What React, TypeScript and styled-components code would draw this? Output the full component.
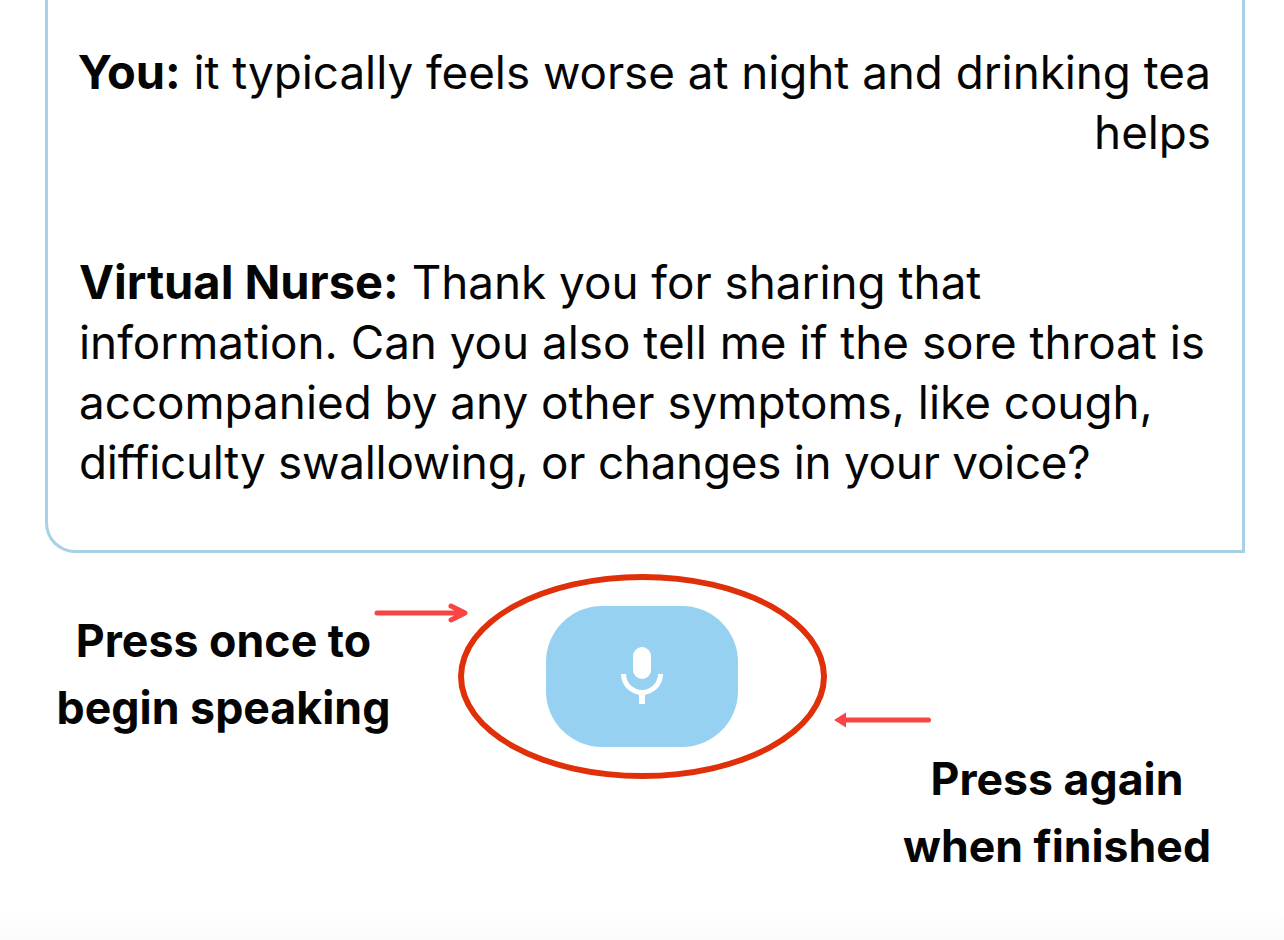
import styled, { createGlobalStyle } from 'styled-components'

const GlobalStyle = createGlobalStyle`
	html, body {
		margin: 0;
		padding: 0;
		background: #fff;
	}
	body {
		font-family: Inter, "Liberation Sans", sans-serif;
		color: #050505;
	}
`

const App = () => {
	return (
		<Page>
			<GlobalStyle />
			<Transcript>
				<UserMessage>
					<b>You:</b> it typically feels worse at night and drinking tea helps
				</UserMessage>
				<NurseMessage>
					<b>Virtual Nurse:</b> Thank you for sharing that information. Can you also tell me if the
					sore throat is accompanied by any other symptoms, like cough,{' '}
					<LastLine>difficulty swallowing, or changes in your voice?</LastLine>
				</NurseMessage>
			</Transcript>
			<Controls>
				<LeftCaption>
					Press once to
					<br />
					begin speaking
				</LeftCaption>
				<Ring>
					<ArrowRight width="96" height="24" viewBox="0 0 96 24">
						<path d="M3 12H90M77 5l14 7-14 7" />
					</ArrowRight>
					<MicButton>
						<svg width="48" height="68" viewBox="0 0 48 68" fill="none">
							<rect x="15" y="4" width="18" height="32" rx="9" fill="#fff" />
							<path d="M5.5 31a18.5 18.5 0 0 0 37 0" stroke="#fff" strokeWidth="5" />
							<rect x="21" y="49" width="6" height="12" fill="#fff" />
						</svg>
					</MicButton>
					<ArrowLeft width="100" height="20" viewBox="0 0 100 20">
						<path d="M96.5 10H10" />
						<path d="M2 10l12-7.5v15z" fill="#f94444" stroke="none" />
					</ArrowLeft>
				</Ring>
				<RightCaption>
					Press again
					<br />
					when finished
				</RightCaption>
			</Controls>
			<BottomFade />
		</Page>
	)
}

export default App

const Page = styled.div`
	display: flex;
	flex-direction: column;
	width: 1284px;
	height: 940px;
	overflow: hidden;
	background: #fff;
`

const Transcript = styled.div`
	display: flex;
	flex-direction: column;
	gap: 89px;
	box-sizing: border-box;
	flex: none;
	width: 1200px;
	height: 553px;
	margin-left: 45px;
	padding: 42px 31px 0 31px;
	border: 3px solid #a8d0e6;
	border-top: none;
	border-bottom-left-radius: 30px;
	font-size: 45.8px;
	line-height: 60px;
	font-weight: 400;

	b {
		font-size: 47px;
		font-weight: 700;
	}
`

const UserMessage = styled.div`
	margin-left: -12px;
	text-align: right;
	letter-spacing: -0.04px;
`

const NurseMessage = styled.div`
	text-align: left;
`

const LastLine = styled.span`
	letter-spacing: -0.25px;
`

const Controls = styled.div`
	display: grid;
	grid-template-columns: 448px 368px 1fr;
	column-gap: 11px;
	margin-top: 21px;
	flex: 1;
`

const LeftCaption = styled.div`
	padding-top: 34px;
	margin-left: -1px;
	text-align: center;
	font-size: 44.7px;
	line-height: 67px;
	font-weight: 700;
`

const RightCaption = styled.div`
	padding-top: 172px;
	margin-left: 19px;
	width: 400px;
	text-align: center;
	font-size: 44.6px;
	line-height: 67px;
	font-weight: 700;
`

const Ring = styled.div`
	position: relative;
	display: flex;
	align-items: center;
	justify-content: center;
	box-sizing: border-box;
	width: 369px;
	height: 205px;
	margin-left: -1px;
	border: 6px solid #e0300a;
	border-radius: 50%;
`

const MicButton = styled.button`
	display: flex;
	align-items: center;
	justify-content: center;
	width: 192px;
	height: 141px;
	margin-right: 1px;
	padding: 0;
	border: none;
	border-radius: 56px;
	background: #97d1f2;
`

const ArrowRight = styled.svg`
	position: absolute;
	left: -90px;
	top: 21px;
	fill: none;
	stroke: #f94444;
	stroke-width: 5;
	stroke-linecap: round;
	stroke-linejoin: round;
`

const ArrowLeft = styled.svg`
	position: absolute;
	right: -111px;
	top: 130px;
	fill: none;
	stroke: #f94444;
	stroke-width: 5;
	stroke-linecap: round;
`

const BottomFade = styled.div`
	flex: none;
	height: 30px;
	background: linear-gradient(#fff, #fafafa);
`
